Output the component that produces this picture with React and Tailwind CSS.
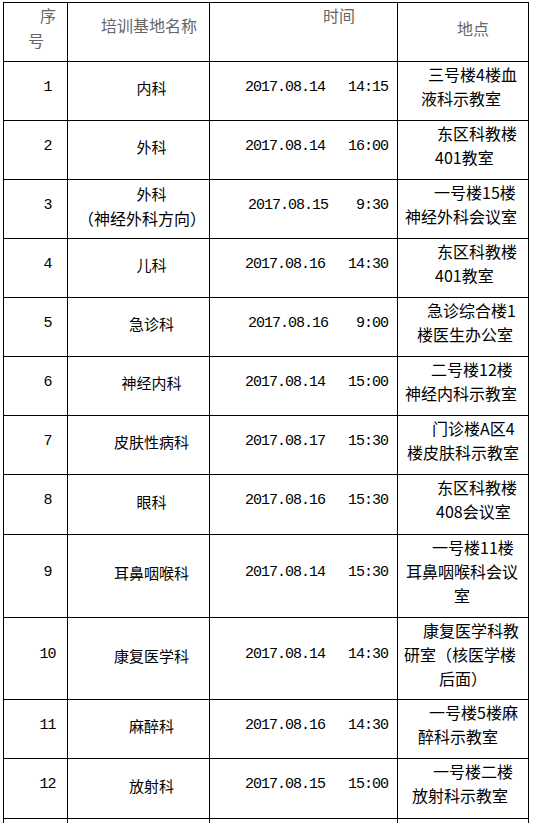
const cjk = "font-['Noto_Sans_CJK_SC',sans-serif]";
const mono = "font-['Liberation_Mono',monospace]";

const rows = [
  { n: "1", name: ["内科"], date: "2017.08.14", time: "14:15", dl: "pl-[35px]", h: "h-[59px]",
    loc: [["三号楼4楼血", "pl-[30px]"], ["液科示教室", "pl-[23px]"]] },
  { n: "2", name: ["外科"], date: "2017.08.14", time: "16:00", dl: "pl-[35px]", h: "h-[59px]",
    loc: [["东区科教楼", "pl-[39px]"], ["401教室", "pl-[37px]"]] },
  { n: "3", name: ["外科", "（神经外科方向）"], date: "2017.08.15", time: "9:30", dl: "pl-[38px]", h: "h-[59px]",
    loc: [["一号楼15楼", "pl-[36px]"], ["神经外科会议室", "pl-[7px]"]] },
  { n: "4", name: ["儿科"], date: "2017.08.16", time: "14:30", dl: "pl-[35px]", h: "h-[59px]",
    loc: [["东区科教楼", "pl-[39px]"], ["401教室", "pl-[37px]"]] },
  { n: "5", name: ["急诊科"], date: "2017.08.16", time: "9:00", dl: "pl-[38px]", h: "h-[59px]",
    loc: [["急诊综合楼1", "pl-[29px]"], ["楼医生办公室", "pl-[19px]"]] },
  { n: "6", name: ["神经内科"], date: "2017.08.14", time: "15:00", dl: "pl-[35px]", h: "h-[59px]",
    loc: [["二号楼12楼", "pl-[33px]"], ["神经内科示教室", "pl-[7px]"]] },
  { n: "7", name: ["皮肤性病科"], date: "2017.08.17", time: "15:30", dl: "pl-[35px]", h: "h-[59px]",
    loc: [["门诊楼A区4", "pl-[34px]"], ["楼皮肤科示教室", "pl-[9px]"]] },
  { n: "8", name: ["眼科"], date: "2017.08.16", time: "15:30", dl: "pl-[35px]", h: "h-[60px]",
    loc: [["东区科教楼", "pl-[39px]"], ["408会议室", "pl-[38px]"]] },
  { n: "9", name: ["耳鼻咽喉科"], date: "2017.08.14", time: "15:30", dl: "pl-[35px]", h: "h-[83px]",
    loc: [["一号楼11楼", "pl-[34px]"], ["耳鼻咽喉科会议", "pl-[8px]"], ["室", "pl-[56px]"]] },
  { n: "10", name: ["康复医学科"], date: "2017.08.14", time: "14:30", dl: "pl-[35px]", h: "h-[82px]",
    loc: [["康复医学科教", "pl-[25px]"], ["研室（核医学楼", "pl-[6px]"], ["后面）", "pl-[41px]"]] },
  { n: "11", name: ["麻醉科"], date: "2017.08.16", time: "14:30", dl: "pl-[35px]", h: "h-[59px]",
    loc: [["一号楼5楼麻", "pl-[31px]"], ["醉科示教室", "pl-[20px]"]] },
  { n: "12", name: ["放射科"], date: "2017.08.15", time: "15:00", dl: "pl-[35px]", h: "h-[60px]",
    loc: [["一号楼二楼", "pl-[35px]"], ["放射科示教室", "pl-[14px]"]] },
];

function Row({ r }) {
  const cell = `border-r border-b border-black ${r.h}`;
  return (
    <>
      <div className={`${cell} flex items-center justify-center pl-[24px] pb-[6px] text-[15px] tracking-[-1px] ${mono}`}>
        {r.n}
      </div>
      <div className={`${cell} flex flex-col justify-center pb-[6px] text-[15px] leading-[24px] ${cjk}`}>
        {r.name.map((t, i) =>
          i === 0 ? (
            <div key={i} className="pl-[26px] text-center">{t}</div>
          ) : (
            <div key={i} className="pl-[10px] whitespace-nowrap text-[16px]">{t}</div>
          )
        )}
      </div>
      <div className={`${cell} flex items-center justify-between ${r.dl} pr-[9px] pb-[6px] text-[15px] tracking-[-1px] ${mono}`}>
        <span>{r.date}</span>
        <span>{r.time}</span>
      </div>
      <div className={`${cell} text-[16px] leading-[24px] whitespace-nowrap ${cjk}`}>
        {r.loc.map(([t, pl], i) => (
          <div key={i} className={pl}>{t}</div>
        ))}
      </div>
    </>
  );
}

export default function App() {
  return (
    <div className="h-screen bg-white pt-[2px] pl-[3px] text-black overflow-hidden">
      <div className="grid w-fit grid-cols-[64px_142px_188px_131px] border-l border-t border-black">
        {/* header */}
        <div className={`h-[59px] border-r border-b border-black text-[16px] leading-[25px] text-[#666] ${cjk}`}>
          <div className="pl-[36px]">序</div>
          <div className="pl-[24px]">号</div>
        </div>
        <div className={`h-[59px] border-r border-b border-black pt-[10px] pl-[33px] text-[16px] leading-[25px] text-[#666] ${cjk}`}>
          培训基地名称
        </div>
        <div className={`h-[59px] border-r border-b border-black pl-[113px] text-[16px] leading-[25px] text-[#666] ${cjk}`}>
          时间
        </div>
        <div className={`h-[59px] border-r border-b border-black pt-[13px] pl-[59px] text-[16px] leading-[25px] text-[#666] ${cjk}`}>
          地点
        </div>

        {rows.map((r) => (
          <Row key={r.n} r={r} />
        ))}

        {/* next row, only its top shows in the frame */}
        <div className="h-[59px] border-r border-b border-black" />
        <div className="h-[59px] border-r border-b border-black" />
        <div className="h-[59px] border-r border-b border-black" />
        <div className={`h-[59px] border-r border-b border-black pt-[2px] text-[16px] leading-[24px] whitespace-nowrap ${cjk}`}>
          <div className="pl-[35px]">一号楼一楼</div>
        </div>
      </div>
    </div>
  );
}
